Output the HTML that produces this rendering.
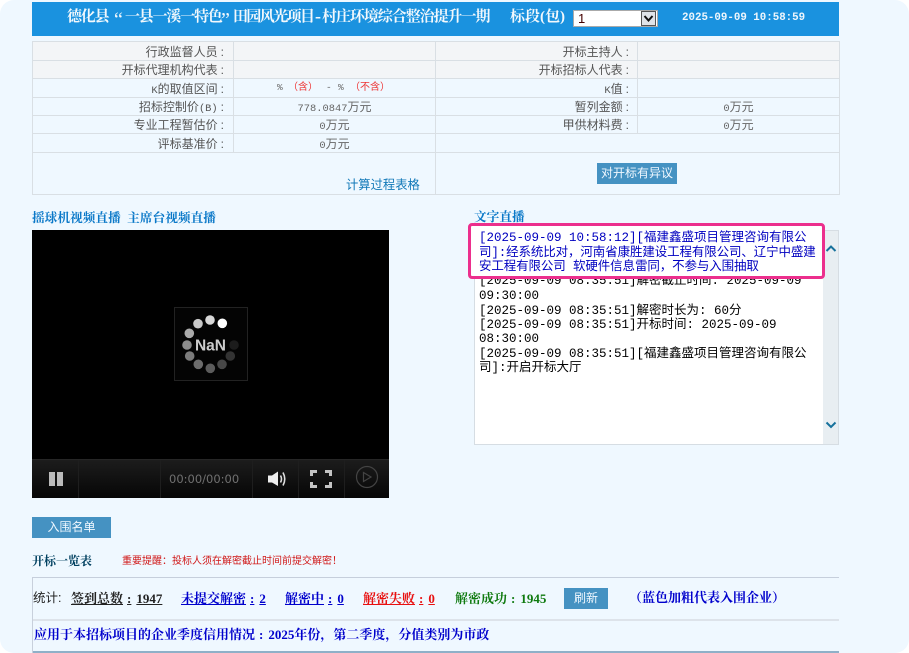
<!DOCTYPE html>
<html lang="zh"><head><meta charset="utf-8"><title>开标大厅</title>
<style>
html,body{margin:0;padding:0;background:#fff}
#p{position:relative;width:909px;height:653px;overflow:hidden;background:#eff8ff;border-radius:14px;font-family:"Liberation Sans","WenQuanYi Zen Hei","Noto Sans CJK SC",sans-serif;font-size:12px;color:#555}
#p div{position:absolute;white-space:nowrap}
.serif{font-family:"Liberation Serif","Noto Serif CJK SC",serif;font-weight:bold}
.h{background:#d9dfe4}
.l{text-align:right;color:#555;line-height:18px;height:18px}
.l i{font-style:normal;padding-left:3px}
.l b,.v b{font:normal 10.4px "Liberation Mono",monospace}
.v{text-align:center;color:#666;line-height:18px;height:18px;font-size:12px}
.btn{background:#4592c2;color:#f0f8ff;text-align:center;font-size:12px}
.lg{font-family:"Liberation Mono","WenQuanYi Zen Hei","Noto Sans CJK SC",monospace;font-size:12.5px;line-height:14.3px;left:479px;width:345px;color:#000}
.s{text-decoration:underline;line-height:16px;top:591px;font-size:13px}
.c{padding:0 5px 0 4px}
.t{font-size:15px;line-height:21px;color:#f2f8fc;top:7px;letter-spacing:-1.2px}
.q{font-size:20px;letter-spacing:0;top:10px;font-weight:normal}
.r{font-size:10px;line-height:18px;color:#e33;top:79px}
</style></head><body><div id="p">

<div style="left:32px;top:2px;width:807px;height:34px;background:#1a92df"></div>
<div class="serif t" style="left:67px">德化县</div>
<div class="serif t q" style="left:114px">“</div>
<div class="serif t" style="left:125px">一县一溪一特色</div>
<div class="serif t q" style="left:221px">”</div>
<div class="serif t" style="left:233px;letter-spacing:-1.600px">田园风光项目</div>
<div class="serif t" style="left:315px;font-size:18px;letter-spacing:0;top:6px">-</div>
<div class="serif t" style="left:322px;letter-spacing:-1.05px">村庄环境综合整治提升一期</div>
<div class="serif t" style="left:510px;letter-spacing:0">标段(包)</div>
<div style="left:573px;top:10px;width:83px;height:15px;background:#fff;border:1px solid #aaa"></div>
<div style="left:578px;top:11px;font:13px/15px 'Liberation Sans',sans-serif;color:#400">1</div>
<div style="left:641px;top:11px;width:15px;height:15px;background:#dfe3e8;border:1px solid #555;box-sizing:border-box"><svg width="13" height="13" style="display:block"><path d="M2.500 4 L6.500 8.500 L10.500 4" fill="none" stroke="#111" stroke-width="2"/></svg></div>
<div style="left:682px;top:10px;font:bold 10.8px/16px 'Liberation Mono',monospace;color:#eef6fc">2025-09-09 10:58:59</div>

<!-- table -->
<div style="left:32px;top:41px;width:807px;height:37px;background:#f3f5f7"></div>
<div class="h" style="left:32px;top:41px;width:808px;height:1px"></div>
<div class="h" style="left:32px;top:60px;width:808px;height:1px"></div>
<div class="h" style="left:32px;top:78px;width:808px;height:1px"></div>
<div class="h" style="left:32px;top:97px;width:808px;height:1px"></div>
<div class="h" style="left:32px;top:115px;width:808px;height:1px"></div>
<div class="h" style="left:32px;top:133px;width:808px;height:1px"></div>
<div class="h" style="left:32px;top:152px;width:808px;height:1px"></div>
<div class="h" style="left:32px;top:194px;width:808px;height:1px"></div>
<div class="h" style="left:32px;top:41px;width:1px;height:154px"></div>
<div class="h" style="left:233px;top:41px;width:1px;height:112px"></div>
<div class="h" style="left:435px;top:41px;width:1px;height:154px"></div>
<div class="h" style="left:637px;top:41px;width:1px;height:92px"></div>
<div class="h" style="left:839px;top:41px;width:1px;height:154px"></div>

<div class="l" style="left:33px;width:191px;top:43px">行政监督人员<i>:</i></div>
<div class="l" style="left:33px;width:191px;top:61px">开标代理机构代表<i>:</i></div>
<div class="l" style="left:33px;width:191px;top:80px"><b>K</b>的取值区间<i>:</i></div>
<div class="l" style="left:33px;width:191px;top:98px">招标控制价<b>(B)</b><i>:</i></div>
<div class="l" style="left:33px;width:191px;top:116px">专业工程暂估价<i>:</i></div>
<div class="l" style="left:33px;width:191px;top:135px">评标基准价<i>:</i></div>
<div class="l" style="left:436px;width:193px;top:43px">开标主持人<i>:</i></div>
<div class="l" style="left:436px;width:193px;top:61px">开标招标人代表<i>:</i></div>
<div class="l" style="left:436px;width:193px;top:80px"><b>K</b>值<i>:</i></div>
<div class="l" style="left:436px;width:193px;top:98px">暂列金额<i>:</i></div>
<div class="l" style="left:436px;width:193px;top:116px">甲供材料费<i>:</i></div>

<div class="v" style="left:277px;top:79px;font:9.5px/18px 'Liberation Mono',monospace">%</div>
<div class="r" style="left:288px">&#xFF08;含&#xFF09;</div>
<div class="v" style="left:326px;top:79px;font:9.5px/18px 'Liberation Mono',monospace">-</div>
<div class="v" style="left:338px;top:79px;font:9.5px/18px 'Liberation Mono',monospace">%</div>
<div class="r" style="left:350px">&#xFF08;不含&#xFF09;</div>
<div class="v" style="left:234px;width:201px;top:98px"><b>778.0847</b>万元</div>
<div class="v" style="left:234px;width:201px;top:116px"><b>0</b>万元</div>
<div class="v" style="left:234px;width:201px;top:135px"><b>0</b>万元</div>
<div class="v" style="left:638px;width:201px;top:98px"><b>0</b>万元</div>
<div class="v" style="left:638px;width:201px;top:116px"><b>0</b>万元</div>
<div style="left:346px;top:176px;font-size:12.3px;line-height:18px;color:#1078b8">计算过程表格</div>
<div class="btn" style="left:597px;top:163px;width:80px;height:21px;line-height:21px">对开标有异议</div>

<!-- video -->
<div class="serif" style="left:32px;top:210px;font-size:12.7px;line-height:17px;color:#0a78c8;white-space:pre">摇球机视频直播  主席台视频直播</div>
<div style="left:32px;top:230px;width:357px;height:268px;background:#000"></div>
<div style="left:174px;top:307px;width:72px;height:72px;border:1px solid #222;background:#040404"></div>
<svg style="position:absolute;left:174px;top:307px" width="74" height="74">
<g>
<circle cx="36" cy="13" r="4.800" fill="#d8d8d8"/><circle cx="48.300" cy="16.300" r="4.800" fill="#fff"/>
<circle cx="24" cy="16.700" r="4.800" fill="#c8c8c8"/><circle cx="15.300" cy="26.300" r="4.800" fill="#aaa"/>
<circle cx="13" cy="38" r="4.800" fill="#8c8c8c"/><circle cx="15.700" cy="49" r="4.800" fill="#7c7c7c"/>
<circle cx="24.300" cy="57.300" r="4.800" fill="#6c6c6c"/><circle cx="36.300" cy="61.300" r="4.800" fill="#5c5c5c"/>
<circle cx="48" cy="57.300" r="4.800" fill="#484848"/><circle cx="56.300" cy="49" r="4.800" fill="#333"/>
<circle cx="60" cy="38" r="4.800" fill="#1c1c1c"/>
</g>
<text x="36.500" y="43.500" text-anchor="middle" font-family="Liberation Sans" font-weight="bold" font-size="15.500" fill="#ccc">NaN</text>
</svg>
<div style="left:32px;top:459px;width:357px;height:39px;background:linear-gradient(#1c1c1c,#060606);border-top:1px solid #262626;box-sizing:border-box"></div>
<div style="left:78px;top:460px;width:1px;height:38px;background:#1e1e1e"></div>
<div style="left:160px;top:460px;width:1px;height:38px;background:#1e1e1e"></div>
<div style="left:252px;top:460px;width:1px;height:38px;background:#1e1e1e"></div>
<div style="left:298px;top:460px;width:1px;height:38px;background:#1e1e1e"></div>
<div style="left:344px;top:460px;width:1px;height:38px;background:#1e1e1e"></div>
<div style="left:49px;top:472px;width:6px;height:14px;background:#bbb"></div>
<div style="left:57px;top:472px;width:6px;height:14px;background:#bbb"></div>
<div style="left:169px;top:471px;font:11.5px/16px 'DejaVu Sans',sans-serif;color:#707070">00:00/00:00</div>
<svg style="position:absolute;left:266px;top:468px" width="24" height="22"><path d="M2 7.500H6L12 3.500V18L6 14.500H2Z" fill="#eee"/><path d="M14.500 7.500Q16.500 11 14.500 14.500M17 4.500Q20.500 11 17 17.500" fill="none" stroke="#ddd" stroke-width="1.600"/></svg>
<svg style="position:absolute;left:308px;top:468px" width="26" height="22"><path d="M3.500 8V3.500H9M17 3.500H22.500V8M3.500 14V18.500H9M17 18.500H22.500V14" fill="none" stroke="#c4c4c4" stroke-width="3"/></svg>
<svg style="position:absolute;left:354px;top:464px" width="26" height="26"><circle cx="13" cy="13" r="10.500" fill="none" stroke="#444" stroke-width="1.200"/><path d="M9.500 8.500L17 13L9.500 17.500Z" fill="none" stroke="#444" stroke-width="1.200"/></svg>

<!-- log -->
<div class="serif" style="left:474px;top:209px;font-size:12.7px;line-height:17px;color:#0a78c8">文字直播</div>
<div style="left:474px;top:230px;width:365px;height:215px;background:#fff;border:1px solid #d6dde3;box-sizing:border-box"></div>
<div style="left:823px;top:231px;width:15px;height:213px;background:#e8eef2"></div>
<svg style="position:absolute;left:824px;top:243px" width="14" height="12"><path d="M2.500 8L7 3.500L11.500 8" fill="none" stroke="#17719c" stroke-width="2"/></svg>
<svg style="position:absolute;left:824px;top:419px" width="14" height="12"><path d="M2.500 3.500L7 8L11.500 3.500" fill="none" stroke="#17719c" stroke-width="2"/></svg>
<div class="lg" style="top:274px;height:14px;overflow:hidden;line-height:14px">[2025-09-09 08:35:51]解密截止时间: 2025-09-09</div>
<div class="lg" style="top:289px">09:30:00</div>
<div class="lg" style="top:304px">[2025-09-09 08:35:51]解密时长为: 60分</div>
<div class="lg" style="top:318px">[2025-09-09 08:35:51]开标时间: 2025-09-09</div>
<div class="lg" style="top:332px">08:30:00</div>
<div class="lg" style="top:347px">[2025-09-09 08:35:51][福建鑫盛项目管理咨询有限公<br>司]:开启开标大厅</div>
<div style="left:468px;top:223px;width:357px;height:56px;box-sizing:border-box;background:#fff;border:3px solid #ec2f8d;border-radius:4px"></div>
<div class="lg" style="top:231px;color:#0000c0;line-height:14.500px">[2025-09-09 10:58:12][福建鑫盛项目管理咨询有限公<br><span style="letter-spacing:-.12px">司]:经系统比对&#xFF0C;河南省康胜建设工程有限公司&#x3001;辽宁中盛建</span><br><span style="letter-spacing:-.12px">安工程有限公司 软硬件信息雷同&#xFF0C;不参与入围抽取</span></div>

<!-- bottom -->
<div class="btn" style="left:32px;top:517px;width:79px;height:21px;line-height:21px">入围名单</div>
<div class="serif" style="left:32px;top:553px;font-size:12px;line-height:17px;color:#004060">开标一览表</div>
<div style="left:122px;top:555px;font-size:10px;line-height:13px;color:#d01818">重要提醒&#xFF1A;投标人须在解密截止时间前提交解密&#xFF01;</div>

<div style="left:32px;top:577px;width:1px;height:76px;background:#c8d0dc"></div>
<div style="left:32px;top:577px;width:807px;height:1px;background:#c6cfdc"></div>
<div style="left:33px;top:619px;width:806px;height:2px;background:#dde3ea"></div>
<div style="left:33px;top:651px;width:806px;height:2px;background:#8fb0c8"></div>

<div style="left:33px;top:590px;font-size:12.5px;line-height:16px;color:#222">统计:</div>
<div class="s serif" style="left:71px;color:#222">签到总数<span class="c">:</span>1947</div>
<div class="s serif" style="left:181px;color:#0000cc">未提交解密<span class="c">:</span>2</div>
<div class="s serif" style="left:285px;color:#0000cc">解密中<span class="c">:</span>0</div>
<div class="s serif" style="left:363px;color:#e81010">解密失败<span class="c">:</span>0</div>
<div class="serif" style="left:455px;top:591px;font-size:13px;line-height:16px;color:#0f7a0f">解密成功<span class="c">:</span>1945</div>
<div class="btn" style="left:564px;top:588px;width:44px;height:21px;line-height:21px">刷新</div>
<div class="serif" style="left:629px;top:590px;font-size:13px;line-height:16px;color:#0000cc">&#xFF08;蓝色加粗代表入围企业&#xFF09;</div>
<div class="serif" style="left:34px;top:627px;font-size:13px;line-height:16px;color:#0000cc">应用于本招标项目的企业季度信用情况<span class="c">:</span>2025年份&#xFF0C;第二季度&#xFF0C;分值类别为市政</div>
</div></body></html>
